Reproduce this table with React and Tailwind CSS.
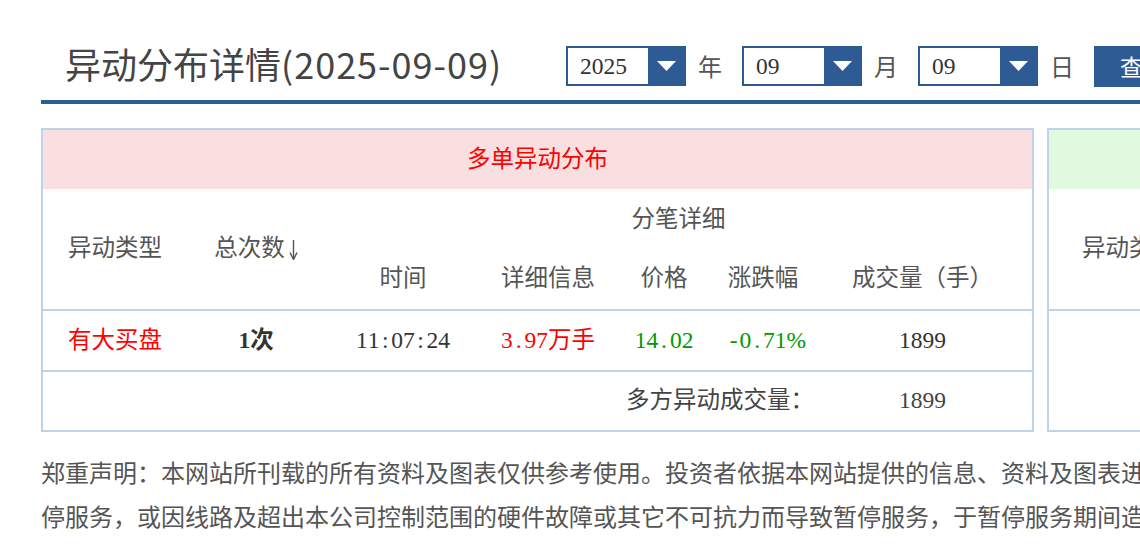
const serif = "font-['Liberation_Serif','Noto_Sans_CJK_SC',serif]";
const sans = "font-['Noto_Sans_CJK_SC',sans-serif]";

const DateSelect = ({ value }) => (
  <div className="flex h-[40px] w-[120px] shrink-0 border-2 border-[#2f5b95]">
    <div className={`flex flex-1 items-center bg-white pl-[12px] pt-[2px] text-[23.5px] text-[#333] ${serif}`}>{value}</div>
    <div className="flex w-[36px] items-center justify-center bg-[#2f5b95]">
      <svg width="19" height="10" viewBox="0 0 19 10">
        <path d="M0 0H19L9.5 10Z" fill="#fff" />
      </svg>
    </div>
  </div>
);

const Unit = ({ children }) => (
  <span className={`ml-[12px] mr-[20px] text-[24px] leading-none text-[#555] ${sans}`}>{children}</span>
);

// half-width chars drawn on a fixed 0.5em cell, like the SimSun numbers of the original
const Mono = ({ text }) => (
  <span>
    {[...text].map((c, i) =>
      c.charCodeAt(0) < 128 ? (
        <span key={i} className="inline-block w-[0.5em] text-center">{c}</span>
      ) : (
        <span key={i}>{c}</span>
      )
    )}
  </span>
);

const cols = 'grid grid-cols-[144px_138px_156px_134px_98px_100px_1fr]';
const cell = 'flex items-center justify-center';

const App = () => {
  return (
    <div className="h-[544px] w-[1140px] overflow-hidden bg-white">
      <div className="w-[2100px] pl-[41px]">
        {/* title + date picker */}
        <div className="flex h-[104px] items-center border-b-4 border-[#2f5b95] pl-[24px] pt-[32px]">
          <h1 className={`mb-[6px] w-[501px] shrink-0 whitespace-nowrap text-[36px] leading-[50px] text-[#444] ${sans}`}>
            异动分布详情<span className="tracking-[1px]">(2025-09-09)</span>
          </h1>
          <DateSelect value="2025" />
          <Unit>年</Unit>
          <DateSelect value="09" />
          <Unit>月</Unit>
          <DateSelect value="09" />
          <Unit>日</Unit>
          <button className={`h-[41px] bg-[#2f5b95] px-[26px] text-[23px] leading-none text-white ${sans}`}>查询</button>
        </div>

        <div className="mt-[24px] flex gap-[13px]">
          {/* 多单 */}
          <div className={`w-[993px] shrink-0 border-2 border-[#bdd4e8] text-[23.5px] ${serif}`}>
            <div className="flex h-[59px] items-center justify-center bg-[#f9dfe0] text-[#ff0000]">多单异动分布</div>
            <div className={`${cols} h-[120px] grid-rows-[60px_60px] text-[#555]`}>
              <div className={`${cell} row-span-2`}>异动类型</div>
              <div className={`${cell} row-span-2`}>
                总次数
                <svg className="ml-[4px] mt-[2px]" width="9" height="20" viewBox="0 0 9 20">
                  <path d="M4.5 0V18" stroke="#555" strokeWidth="1.4" />
                  <path d="M1 12.5L4.5 19.5L8 12.5" stroke="#555" strokeWidth="1.4" fill="none" />
                </svg>
              </div>
              <div className={`${cell} col-span-5 pt-[2px]`}>分笔详细</div>
              <div className={cell}>时间</div>
              <div className={cell}>详细信息</div>
              <div className={cell}>价格</div>
              <div className={cell}>涨跌幅</div>
              <div className={cell}>成交量（手）</div>
            </div>
            <div className={`${cols} h-[61px] border-t-2 border-[#bdd4e8] text-[#333]`}>
              <div className={`${cell} text-[#ff0000]`}>有大买盘</div>
              <div className={`${cell} font-bold`}>1次</div>
              <div className={cell}><Mono text="11:07:24" /></div>
              <div className={`${cell} text-[#ff0000]`}><Mono text="3.97万手" /></div>
              <div className={`${cell} text-[#009a00]`}><Mono text="14.02" /></div>
              <div className={`${cell} text-[#009a00]`}><Mono text="-0.71%" /></div>
              <div className={cell}>1899</div>
            </div>
            <div className={`${cols} h-[60px] border-t-2 border-[#bdd4e8] text-[#444]`}>
              <div className={`${cell} col-span-2 col-start-5 whitespace-nowrap pl-[12px]`}>多方异动成交量：</div>
              <div className={cell}>1899</div>
            </div>
          </div>

          {/* 空单 */}
          <div className={`w-[993px] shrink-0 border-2 border-[#bdd4e8] text-[23.5px] ${serif}`}>
            <div className="flex h-[59px] items-center justify-center bg-[#dffadf] text-[#009a00]">空单异动分布</div>
            <div className="grid h-[120px] grid-cols-[160px_1fr] text-[#555]">
              <div className={cell}>异动类型</div>
              <div />
            </div>
            <div className="h-[121px] border-t-2 border-[#bdd4e8]" />
          </div>
        </div>

        {/* disclaimer */}
        <div className={`mt-[18px] whitespace-nowrap text-[24px] leading-[44px] text-[#555] ${sans}`}>
          <p>郑重声明：本网站所刊载的所有资料及图表仅供参考使用。投资者依据本网站提供的信息、资料及图表进行金融、证券等投资所造成的盈亏与本网站无关。</p>
          <p>停服务，或因线路及超出本公司控制范围的硬件故障或其它不可抗力而导致暂停服务，于暂停服务期间造成的一切不便与损失，本网站不承担任何责任。</p>
        </div>
      </div>
    </div>
  );
};

export default App;
